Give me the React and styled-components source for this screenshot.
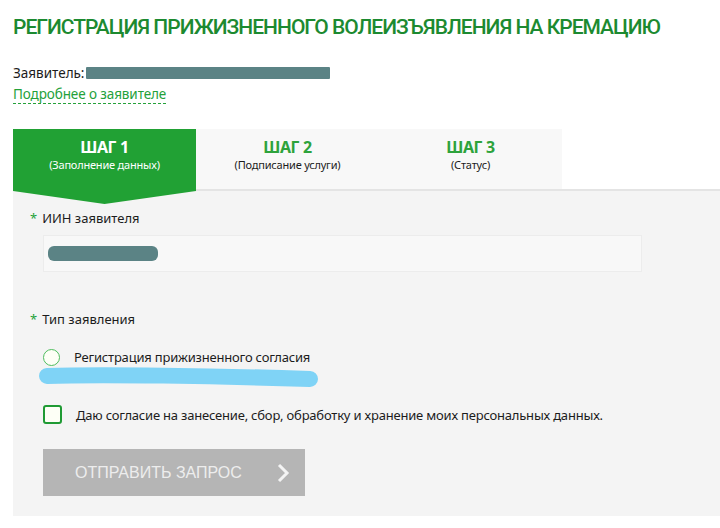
import React from 'react';
import styled, { createGlobalStyle } from 'styled-components';

const GlobalStyle = createGlobalStyle`
	html, body {
		margin: 0;
		padding: 0;
		background: #ffffff;
	}

	body {
		font-family: 'Noto Sans', 'Open Sans', sans-serif;
		color: #1c1c1c;
		overflow: hidden;
	}
`;

const Page = styled.div`
	padding: 13px 0 0 13px;
	width: 707px;
`;

const Title = styled.h1`
	margin: 0;
	font-family: Roboto, 'Noto Sans', sans-serif;
	font-size: 21px;
	font-weight: 500;
	letter-spacing: -1px;
	color: #1c8a30;
	line-height: 28px;
	white-space: nowrap;
`;

const Applicant = styled.div`
	margin-top: 23px;
	font-size: 13.5px;
	line-height: 18px;
	display: flex;
	align-items: center;
`;

const Redacted = styled.span`
	display: inline-block;
	width: ${({ width }) => width}px;
	height: ${({ height }) => height}px;
	background: #5b8385;
	border-radius: ${({ round }) => (round ? '6px' : '1px')};
	margin-left: ${({ offset }) => offset || 0}px;
`;

const MoreLink = styled.a`
	display: inline-block;
	margin-top: -3px;
	font-size: 13.5px;
	line-height: 18px;
	letter-spacing: -0.1px;
	color: #24a13a;
	text-decoration: none;
	border-bottom: 1px dashed #24a13a;
`;

const Steps = styled.div`
	margin-top: 25px;
	display: flex;
	height: 60px;
	border-bottom: 2px solid #e4e4e4;
	position: relative;
	z-index: 1;
`;

const Step = styled.div`
	width: 183px;
	display: flex;
	flex-direction: column;
	align-items: center;
	padding-top: 8px;
	box-sizing: border-box;
	background: ${({ active }) => (active ? '#21a134' : '#f8f8f8')};
	color: ${({ active }) => (active ? '#ffffff' : '#1c1c1c')};
	position: relative;

	&::after {
		content: '';
		display: ${({ active }) => (active ? 'block' : 'none')};
		position: absolute;
		left: 0;
		right: 0;
		top: 100%;
		height: 15px;
		background: #21a134;
		clip-path: polygon(0 0, 100% 0, 100% 2px, 50% 100%, 0 2px);
	}
`;

const StepName = styled.div`
	font-size: 16px;
	font-weight: 700;
	line-height: 20px;
	letter-spacing: -0.4px;
	color: ${({ active }) => (active ? '#ffffff' : '#2ea33c')};
`;

const StepHint = styled.div`
	font-size: 11px;
	line-height: 15px;
	letter-spacing: -0.2px;
`;

const Panel = styled.div`
	background: #f4f4f4;
	padding: 18px 0 0 17px;
	height: 325px;
	box-sizing: border-box;
`;

const Label = styled.div`
	font-size: 13px;
	line-height: 18px;
	display: flex;
	gap: 5px;
	margin-top: ${({ top }) => top || 0}px;

	&::before {
		content: '*';
		color: #24a13a;
	}
`;

const Input = styled.div`
	margin: 8px 0 0 13px;
	width: 599px;
	height: 37px;
	box-sizing: border-box;
	background: #f8f8f8;
	border: 1px solid #ececec;
	display: flex;
	align-items: center;
	padding-left: 4px;
`;

const Option = styled.label`
	display: flex;
	align-items: center;
	font-size: 13px;
	line-height: 18px;
	letter-spacing: -0.2px;
	margin: ${({ margin }) => margin};
	gap: ${({ gap }) => gap}px;
`;

const Radio = styled.span`
	width: 15px;
	height: 15px;
	border: 1.5px solid #4fbd5e;
	border-radius: 50%;
	background: #fdfff6;
	flex-shrink: 0;
`;

const Checkbox = styled.span`
	width: 15px;
	height: 15px;
	border: 2px solid #1f9a34;
	border-radius: 3px;
	background: #fdfff6;
	flex-shrink: 0;
`;

const Scribble = styled.svg`
	display: block;
	margin: 0 0 0 8px;
`;

const Submit = styled.button`
	margin: 25px 0 0 13px;
	width: 262px;
	height: 47px;
	border: none;
	background: #b5b5b5;
	color: #ededed;
	font-family: 'Liberation Sans', Arial, sans-serif;
	font-size: 16px;
	display: flex;
	align-items: center;
	padding: 0 15px 0 32px;
	justify-content: space-between;
`;

export default function App() {
	return (
		<>
			<GlobalStyle />
			<Page>
				<Title>РЕГИСТРАЦИЯ ПРИЖИЗНЕННОГО ВОЛЕИЗЪЯВЛЕНИЯ НА КРЕМАЦИЮ</Title>
				<Applicant>
					Заявитель:
					<Redacted width={244} height={12} offset={2} />
				</Applicant>
				<MoreLink href="#">Подробнее о заявителе</MoreLink>

				<Steps>
					<Step active>
						<StepName active>ШАГ 1</StepName>
						<StepHint>(Заполнение данных)</StepHint>
					</Step>
					<Step>
						<StepName>ШАГ 2</StepName>
						<StepHint>(Подписание услуги)</StepHint>
					</Step>
					<Step>
						<StepName>ШАГ 3</StepName>
						<StepHint>(Статус)</StepHint>
					</Step>
				</Steps>

				<Panel>
					<Label>ИИН заявителя</Label>
					<Input>
						<Redacted width={110} height={15} round />
					</Input>

					<Label top={38}>Тип заявления</Label>
					<Option margin="20px 0 0 13px" gap={14}>
						<Radio />
						Регистрация прижизненного согласия
					</Option>
					<Scribble width="282" height="22" viewBox="0 0 282 22">
						<path
							d="M9 10 C 60 8, 180 10, 272 13"
							stroke="#7fd3f6"
							strokeWidth="16"
							strokeLinecap="round"
							fill="none"
						/>
					</Scribble>
					<Option margin="17px 0 0 13px" gap={14}>
						<Checkbox />
						Даю согласие на занесение, сбор, обработку и хранение моих персональных данных.
					</Option>

					<Submit>
						ОТПРАВИТЬ ЗАПРОС
						<svg width="14" height="20" viewBox="0 0 14 20">
							<path d="M3 2 L11 10 L3 18" stroke="#f4f4f4" strokeWidth="3" fill="none" />
						</svg>
					</Submit>
				</Panel>
			</Page>
		</>
	);
}
